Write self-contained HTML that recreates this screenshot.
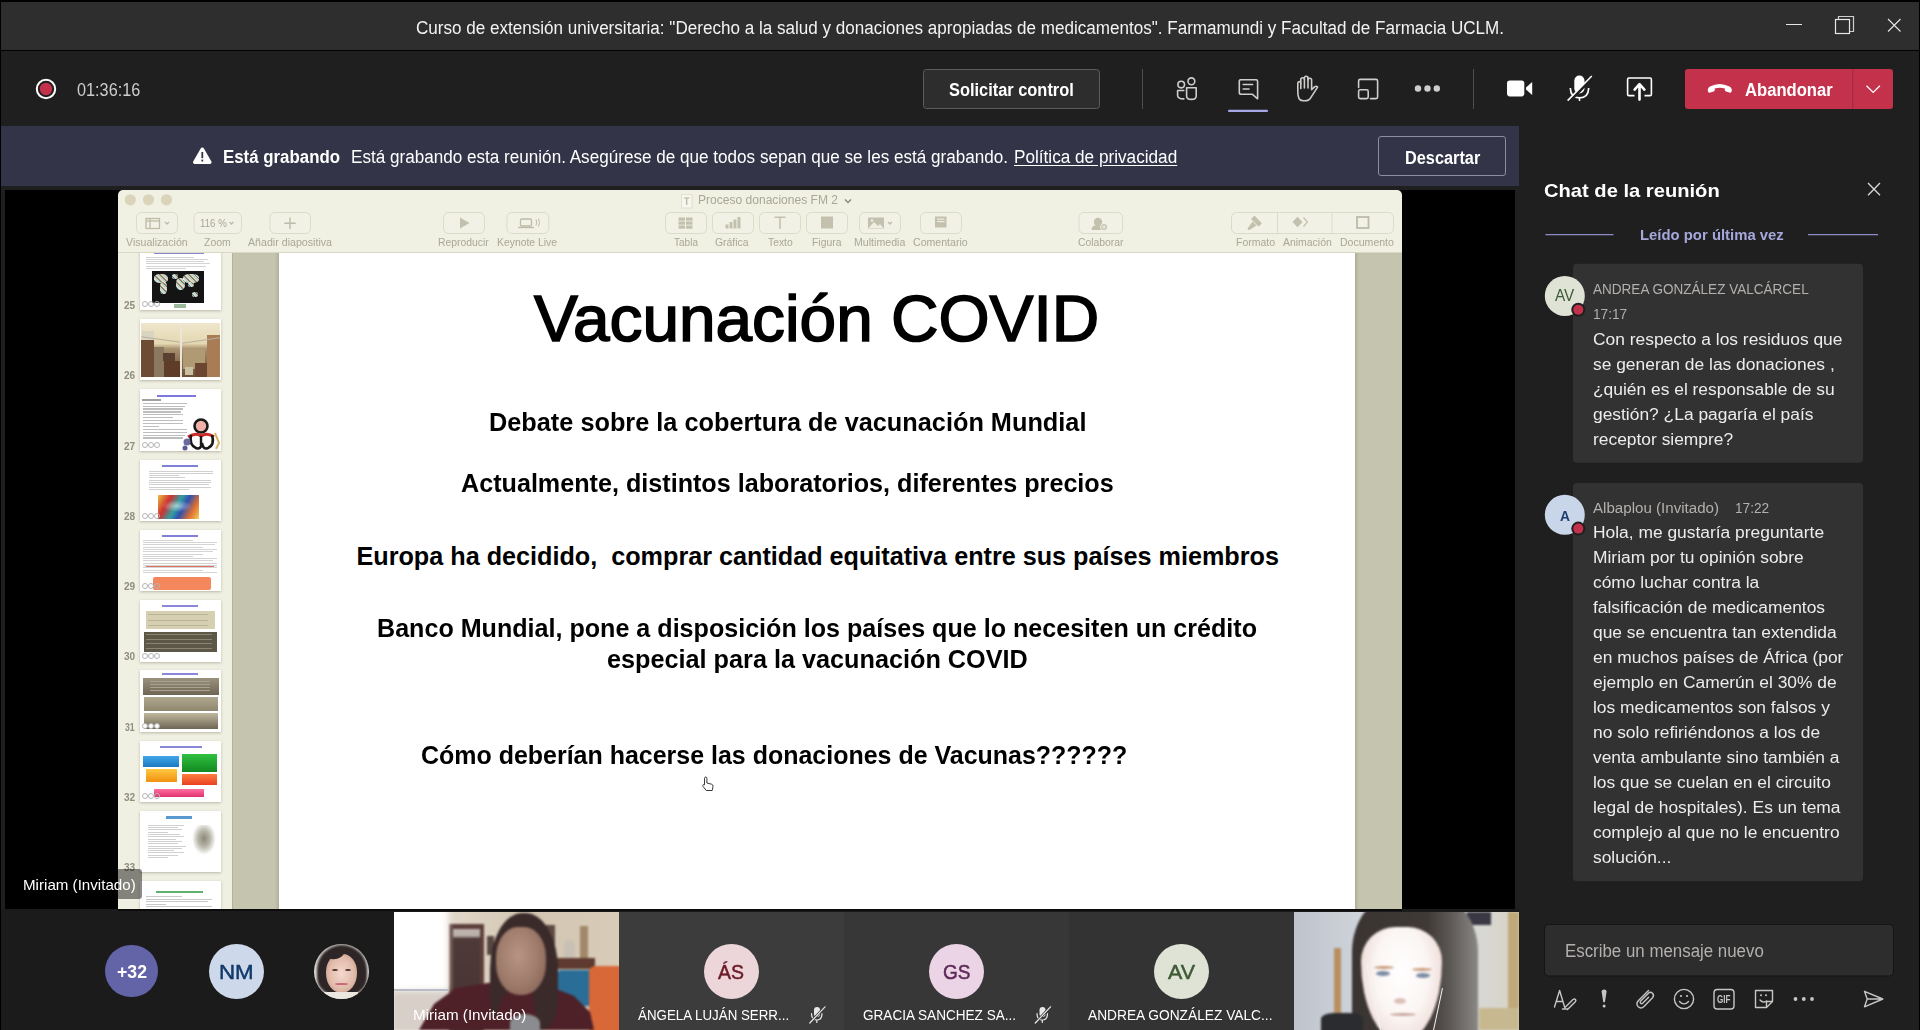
<!DOCTYPE html>
<html><head><meta charset="utf-8">
<style>
*{margin:0;padding:0;box-sizing:border-box}
html,body{width:1920px;height:1030px;overflow:hidden;background:#000;font-family:"Liberation Sans",sans-serif;position:relative}
.a{position:absolute}
.tx{position:absolute;white-space:pre}
svg{position:absolute;overflow:visible}
</style></head><body>

<div class="a" style="left:1px;top:2px;width:1918px;height:48px;background:#2e2e2e"></div>
<div class="a" style="left:1px;top:51px;width:1918px;height:75px;background:#1f1f1f"></div>
<div class="a" style="left:1px;top:126px;width:1518px;height:60px;background:#333448"></div>
<div class="a" style="left:1px;top:186px;width:1518px;height:723px;background:#1f1f1f"></div>
<div class="a" style="left:5px;top:190px;width:1510px;height:719px;background:#000"></div>
<div class="a" style="left:1519px;top:126px;width:400px;height:904px;background:#1f1f1f"></div>
<div class="a" style="left:1px;top:909px;width:1518px;height:121px;background:#1b1b1b"></div>
<div class="a" style="left:118px;top:909px;width:1284px;height:2px;background:#0c0c0c"></div>

<!-- window controls -->
<svg style="left:0;top:0" width="1920" height="50">
 <line x1="1786" y1="24.5" x2="1802" y2="24.5" stroke="#e6e6e6" stroke-width="1"/>
 <path d="M1838.5 19 V16.5 H1853.5 V31.5 H1850" fill="none" stroke="#cfcfcf" stroke-width="1.2"/>
 <rect x="1835.5" y="19.5" width="14" height="14" fill="none" stroke="#e6e6e6" stroke-width="1.2"/>
 <path d="M1888 19 L1900.5 31.5 M1900.5 19 L1888 31.5" stroke="#e6e6e6" stroke-width="1.1"/>
</svg>

<!-- toolbar -->
<svg style="left:0;top:0" width="1920" height="126">
 <circle cx="46" cy="89" r="9.2" fill="none" stroke="#fff" stroke-width="2"/>
 <circle cx="46" cy="89" r="6.2" fill="#c4314b"/>
 <rect x="923.5" y="69.5" width="176" height="39" rx="3" fill="#2d2d2d" stroke="#5c5c5c" stroke-width="1"/>
 <line x1="1142.5" y1="69" x2="1142.5" y2="109" stroke="#4d4d4d" stroke-width="1"/>
 <line x1="1473.5" y1="69" x2="1473.5" y2="109" stroke="#4d4d4d" stroke-width="1"/>
 <g fill="none" stroke="#cfcdcb" stroke-width="1.6" stroke-linecap="round" stroke-linejoin="round">
  <!-- people -->
  <circle cx="1181.2" cy="84.6" r="3.3"/>
  <circle cx="1191.4" cy="81.3" r="3.4"/>
  <path d="M1183.8 90.5 H1177.6 V95.5 Q1177.6 98.8 1183.8 98.9"/>
  <path d="M1186.6 87.8 H1196.2 V96 Q1196.2 99.4 1191.4 99.4 Q1186.6 99.4 1186.6 96 Z"/>
  <!-- chat -->
  <path d="M1240.5 79.8 H1256 Q1257.6 79.8 1257.6 81.4 V98.8 L1252.5 94.3 H1241.2 Q1239.3 94.3 1239.3 92.4 V81 Q1239.3 79.8 1240.5 79.8 Z"/>
  <path d="M1243.2 84.5 H1252.6 M1243.2 89 H1249"/>
  <!-- layout -->
  <path d="M1358.6 87.5 V81 Q1358.6 79.4 1360.2 79.4 H1376 Q1377.6 79.4 1377.6 81 V97 Q1377.6 98.6 1376 98.6 H1370.5"/>
  <rect x="1358.6" y="89.8" width="9.6" height="8.8" rx="1.6"/>
  <!-- hand -->
  <path d="M1299.6 99.4 Q1297.8 97 1297.8 91 V83.3 Q1297.8 81.6 1299.3 81.6 Q1300.8 81.6 1300.8 83.3 V79.5 Q1300.8 77.8 1302.6 77.8 Q1304.4 77.8 1304.4 79.5 V77.9 Q1304.4 76.2 1306.2 76.2 Q1308 76.2 1308 77.9 V80 Q1308 78.3 1309.8 78.3 Q1311.6 78.3 1311.6 80 V89.8 L1314.5 86.9 Q1316.3 85.5 1317.6 87.1 L1310.8 97.6 Q1309.2 100.8 1305 100.8 H1303.4 Q1300.9 100.8 1299.6 99.4 Z"/>
  <path d="M1300.8 83.3 V88.6 M1304.4 79.5 V88 M1308 77.9 V88"/>
 </g>
 <g fill="#cfcdcb"><circle cx="1418" cy="88.5" r="3.2"/><circle cx="1427.5" cy="88.5" r="3.2"/><circle cx="1436.8" cy="88.5" r="3.2"/></g>
 <rect x="1228" y="109.8" width="40" height="2.2" rx="1" fill="#a6a7e6"/>
 <!-- camera -->
 <rect x="1507" y="80.6" width="17.3" height="15.8" rx="2.8" fill="#fff"/>
 <path d="M1526 87.5 L1532.2 82 V95 L1526 89.6 Z" fill="#fff"/>
 <!-- mic off -->
 <rect x="1574.3" y="75.6" width="10.2" height="17.8" rx="5.1" fill="#fff"/>
 <path d="M1570.3 88 Q1570.6 97.8 1579.5 97.8 Q1588.4 97.8 1588.7 88" fill="none" stroke="#fff" stroke-width="1.7"/>
 <line x1="1579.5" y1="97.6" x2="1579.5" y2="101" stroke="#fff" stroke-width="1.5"/>
 <line x1="1569" y1="102" x2="1593" y2="77" stroke="#1f1f1f" stroke-width="3"/>
 <line x1="1567.6" y1="100.6" x2="1591.8" y2="76" stroke="#fff" stroke-width="1.5"/>
 <!-- share -->
 <path d="M1634.5 95.6 H1629 Q1627.6 95.6 1627.6 94.2 V79.4 Q1627.6 78 1629 78 H1650 Q1651.4 78 1651.4 79.4 V94.2 Q1651.4 95.6 1650 95.6 H1644.5" fill="none" stroke="#fff" stroke-width="1.6"/>
 <path d="M1639.5 99.6 V85.5 M1634.6 89.6 L1639.5 84.2 L1644.4 89.6" fill="none" stroke="#fff" stroke-width="2.6" stroke-linecap="round" stroke-linejoin="round"/>
 <!-- abandonar -->
 <rect x="1685" y="69" width="208" height="40" rx="3" fill="#c4314b"/>
 <rect x="1852" y="69" width="1.3" height="40" fill="#a82a42"/>
 <path d="M1708 91.5 Q1707 88.5 1710 86.6 Q1719.5 81.5 1729.5 86.6 Q1732.6 88.5 1731.6 91.5 Q1731 93 1729.3 92.6 L1726 91.6 Q1724.6 91.2 1724.8 89.5 L1724.9 88.6 Q1719.8 86.8 1714.7 88.6 L1714.8 89.5 Q1715 91.2 1713.6 91.6 L1710.3 92.6 Q1708.6 93 1708 91.5 Z" fill="#fff"/>
 <path d="M1866.5 85.8 L1873.2 92.4 L1879.9 85.8" fill="none" stroke="#fff" stroke-width="1.3"/>
</svg>

<!-- banner -->
<svg style="left:0;top:0" width="1520" height="190">
 <path d="M202.3 147.6 Q201.2 147.6 200.4 148.9 L193.2 161.6 Q192.4 163.6 194.3 163.9 H210.3 Q212.2 163.6 211.4 161.6 L204.2 148.9 Q203.4 147.6 202.3 147.6 Z" fill="#fff"/>
 <rect x="201.4" y="152" width="1.8" height="6.2" fill="#333448"/>
 <rect x="201.4" y="159.6" width="1.8" height="1.9" fill="#333448"/>
 <rect x="1378.5" y="136.5" width="127" height="39" rx="2.5" fill="#333448" stroke="#8e8ea0" stroke-width="1"/>
</svg>

<!-- keynote window -->
<div class="a" style="left:118px;top:190px;width:1284px;height:719px;background:#f0f0e3;border-radius:5px 5px 0 0;overflow:hidden">
 <div class="a" style="left:0;top:62px;width:1284px;height:1px;background:#d9d8c6"></div>
 <div class="a" style="left:0;top:63px;width:114px;height:656px;background:#efefe2"></div>
 <div class="a" style="left:114px;top:63px;width:1px;height:656px;background:#b9b095"></div>
 <div class="a" style="left:115px;top:63px;width:1169px;height:656px;background:#c5c4ae"></div>
 <div class="a" style="left:157px;top:63px;width:4px;height:656px;background:linear-gradient(90deg,#c5c4ae,#b0af99)"></div>
 <div class="a" style="left:1237px;top:63px;width:4px;height:656px;background:linear-gradient(90deg,#aeac98,#c5c4ae)"></div>
 <div class="a" style="left:161px;top:63px;width:1076px;height:656px;background:#fff"></div>
</div>
<svg style="left:0;top:0" width="1410" height="260">
 <g fill="#dbd4bb"><circle cx="130.3" cy="199.8" r="5.6"/><circle cx="148.5" cy="199.8" r="5.6"/><circle cx="166.5" cy="199.8" r="5.6"/></g>
 <g fill="#f2f1e6" stroke="#dcdbca" stroke-width="1">
  <rect x="136.5" y="212.5" width="41" height="21" rx="5"/>
  <rect x="194" y="212.5" width="47.5" height="21" rx="5"/>
  <rect x="270" y="212.5" width="40.5" height="21" rx="5"/>
  <rect x="443.5" y="212.5" width="41" height="21" rx="5"/>
  <rect x="507" y="212.5" width="41.8" height="21" rx="5"/>
  <rect x="665.5" y="212.5" width="41" height="21" rx="5"/>
  <rect x="712.5" y="212.5" width="41" height="21" rx="5"/>
  <rect x="759.5" y="212.5" width="41" height="21" rx="5"/>
  <rect x="806.5" y="212.5" width="41" height="21" rx="5"/>
  <rect x="859.5" y="212.5" width="41" height="21" rx="5"/>
  <rect x="920.5" y="212.5" width="41" height="21" rx="5"/>
  <rect x="1079" y="212.5" width="43.6" height="21" rx="5"/>
  <rect x="1231.5" y="212.5" width="162" height="21" rx="5"/>
 </g>
 <g stroke="#dcdbca" stroke-width="1"><line x1="1277.5" y1="213" x2="1277.5" y2="233"/><line x1="1332" y1="213" x2="1332" y2="233"/></g>
 <g fill="none" stroke="#bdbba8" stroke-width="1.3">
  <rect x="146" y="218.5" width="13.5" height="10"/><line x1="150" y1="218.5" x2="150" y2="228.5"/><line x1="146" y1="221" x2="159.5" y2="221"/>
  <path d="M165 222 L167 224 L169 222"/>
  <path d="M229.5 222 L231.5 224 L233.5 222"/>
  <path d="M290 217.5 V229 M284.3 223.2 H295.7" stroke-width="1.4"/>
  <rect x="520.5" y="219" width="11" height="7" rx="1"/><line x1="518" y1="227.5" x2="534" y2="227.5"/>
  <path d="M536 219.5 Q537.5 222.5 536 225.5 M538.5 218.5 Q540.5 222.5 538.5 226.5" stroke-width="1"/>
  <path d="M888 222 L890 224 L892 222"/>
 </g>
 <g fill="#c3c1ad">
  <path d="M460 217.5 L469.5 223 L460 228.5 Z"/>
  <rect x="678.5" y="217.5" width="6.5" height="3.2"/><rect x="686" y="217.5" width="6.5" height="3.2"/>
  <rect x="678.5" y="221.5" width="6.5" height="3.2"/><rect x="686" y="221.5" width="6.5" height="3.2"/>
  <rect x="678.5" y="225.5" width="6.5" height="3.2"/><rect x="686" y="225.5" width="6.5" height="3.2"/>
  <rect x="725.5" y="224.5" width="3" height="4"/><rect x="729.5" y="222" width="3" height="6.5"/><rect x="733.5" y="219.5" width="3" height="9"/><rect x="737.5" y="217" width="3" height="11.5"/>
  <path d="M774.5 216.5 H785.5 V218 H780.8 V229 H779.2 V218 H774.5 Z"/>
  <rect x="821" y="216.5" width="12" height="12"/>
  <rect x="868" y="217.5" width="16" height="11"/>
  <rect x="935" y="216.5" width="11.5" height="11"/>
  <circle cx="1098" cy="222" r="4.2"/><path d="M1091.5 230 Q1091.5 225 1098 225 Q1104.5 225 1104.5 230 Z"/>
  <path d="M1254.5 215.5 L1262 223.5 L1258.5 226.5 L1251 219 Z M1252.5 221.5 L1256.5 225.5 L1249.8 229.8 Q1247.6 230.4 1247.6 228.4 Z"/>
  <path d="M1297.5 216.8 L1302.5 222 L1297.5 227.2 L1292.5 222 Z"/>
 </g>
 <g fill="#efeee1">
  <path d="M868.5 228 L874 222 L878 226 L880 224 L883.5 228 Z" fill="#efeee1"/>
  <circle cx="872" cy="220.5" r="1.3"/>
  <rect x="937" y="218.5" width="7.5" height="1.2"/><rect x="937" y="221" width="7.5" height="1.2"/>
 </g>
 <circle cx="1104" cy="227" r="3.5" fill="#c3c1ad" stroke="#f2f1e6" stroke-width="1"/>
 <path d="M1104 225 V229 M1102 227 H1106" stroke="#f2f1e6" stroke-width="1"/>
 <path d="M1303.5 217.5 L1307.5 222 L1303.5 226.5" fill="none" stroke="#c3c1ad" stroke-width="1.2"/>
 <rect x="1357" y="217" width="11.5" height="11" fill="none" stroke="#bdbba8" stroke-width="1.8"/>
 <path d="M681.5 194.5 H692 V208 H681.5 Z" fill="#f7f6ef" stroke="#dedcc9" stroke-width="0.8"/>
 <path d="M684 198 H689.5 M686.7 198 V205" stroke="#b3b19e" stroke-width="1.2"/>
 <path d="M845 199.5 L848 202.5 L851 199.5" fill="none" stroke="#8d8b7a" stroke-width="1.5"/>
</svg>
<div class="a" style="left:0;top:0;width:1920px;height:909px;overflow:hidden;clip-path:inset(253px 0 0 0)"><div class="a" style="left:140px;top:248.6px;width:81px;height:61.5px;background:#fff;box-shadow:0 1px 2.5px rgba(90,85,60,.35);overflow:hidden"><div class="a" style="left:14px;top:3px;width:50px;height:2px;background:#8a88d0"></div><div class="a" style="left:6px;top:8.0px;width:48px;height:1px;background:#d4d4d4"></div><div class="a" style="left:6px;top:10.3px;width:62px;height:1px;background:#d4d4d4"></div><div class="a" style="left:6px;top:12.6px;width:58px;height:1px;background:#d4d4d4"></div><div class="a" style="left:6px;top:14.9px;width:64px;height:1px;background:#d4d4d4"></div><div class="a" style="left:6px;top:17.2px;width:60px;height:1px;background:#d4d4d4"></div><div class="a" style="left:6px;top:19.5px;width:40px;height:1px;background:#d4d4d4"></div><div class="a" style="left:12px;top:22.5px;width:52px;height:32px;background:#141414"></div><div class="a" style="left:14px;top:25px;width:14px;height:9px;border-radius:40%;background:repeating-linear-gradient(45deg,#f0ece0 0,#f0ece0 1.5px,#4aa898 1.5px,#4aa898 2.2px,#e8a050 2.2px,#e8a050 2.8px,#ffffff 2.8px,#ffffff 4px);opacity:.85;filter:blur(.3px)"></div><div class="a" style="left:20px;top:33px;width:7px;height:12px;border-radius:40%;background:repeating-linear-gradient(45deg,#f0ece0 0,#f0ece0 1.5px,#4aa898 1.5px,#4aa898 2.2px,#e8a050 2.2px,#e8a050 2.8px,#ffffff 2.8px,#ffffff 4px);opacity:.85;filter:blur(.3px)"></div><div class="a" style="left:32px;top:25px;width:6px;height:5px;border-radius:40%;background:repeating-linear-gradient(45deg,#f0ece0 0,#f0ece0 1.5px,#4aa898 1.5px,#4aa898 2.2px,#e8a050 2.2px,#e8a050 2.8px,#ffffff 2.8px,#ffffff 4px);opacity:.85;filter:blur(.3px)"></div><div class="a" style="left:36px;top:29px;width:9px;height:12px;border-radius:40%;background:repeating-linear-gradient(45deg,#f0ece0 0,#f0ece0 1.5px,#4aa898 1.5px,#4aa898 2.2px,#e8a050 2.2px,#e8a050 2.8px,#ffffff 2.8px,#ffffff 4px);opacity:.85;filter:blur(.3px)"></div><div class="a" style="left:43px;top:25px;width:16px;height:9px;border-radius:40%;background:repeating-linear-gradient(45deg,#f0ece0 0,#f0ece0 1.5px,#4aa898 1.5px,#4aa898 2.2px,#e8a050 2.2px,#e8a050 2.8px,#ffffff 2.8px,#ffffff 4px);opacity:.85;filter:blur(.3px)"></div><div class="a" style="left:48px;top:33px;width:6px;height:5px;border-radius:40%;background:repeating-linear-gradient(45deg,#f0ece0 0,#f0ece0 1.5px,#4aa898 1.5px,#4aa898 2.2px,#e8a050 2.2px,#e8a050 2.8px,#ffffff 2.8px,#ffffff 4px);opacity:.85;filter:blur(.3px)"></div><div class="a" style="left:52px;top:43px;width:6px;height:5px;border-radius:40%;background:repeating-linear-gradient(45deg,#f0ece0 0,#f0ece0 1.5px,#4aa898 1.5px,#4aa898 2.2px,#e8a050 2.2px,#e8a050 2.8px,#ffffff 2.8px,#ffffff 4px);opacity:.85;filter:blur(.3px)"></div><div class="a" style="left:34px;top:55px;width:12px;height:4px;background:#9cb89a"></div><div class="a" style="left:2.0px;top:52.2px;width:6px;height:6px;border-radius:50%;border:1px solid #b4b4b4;background:transparent"></div><div class="a" style="left:8.2px;top:52.2px;width:6px;height:6px;border-radius:50%;border:1px solid #b4b4b4;background:transparent"></div><div class="a" style="left:14.4px;top:52.2px;width:6px;height:6px;border-radius:50%;border:1px solid #b4b4b4;background:transparent"></div></div><div class="a" style="left:140px;top:318.9px;width:81px;height:61.5px;background:#fff;box-shadow:0 1px 2.5px rgba(90,85,60,.35);overflow:hidden"><div class="a" style="left:1px;top:3.7px;width:79px;height:54px;overflow:hidden;background:linear-gradient(180deg,#eee6cc 0,#e4d8b0 38%,#a89070 48%,#8a7050 70%,#6a5038 100%)"><div class="a" style="left:0;top:0;width:79px;height:54px;filter:blur(.6px)"><div class="a" style="left:0;top:17px;width:13px;height:37px;background:#6e4c34"></div><div class="a" style="left:1px;top:8px;width:12px;height:9px;background:#d8d4c0"></div><div class="a" style="left:13px;top:24px;width:10px;height:30px;background:#8a7860"></div><div class="a" style="left:22px;top:30px;width:12px;height:8px;background:#5a4030"></div><div class="a" style="left:23px;top:38px;width:17px;height:16px;background:#5e3c28"></div><div class="a" style="left:42px;top:26px;width:22px;height:20px;background:#b09a74"></div><div class="a" style="left:44px;top:44px;width:8px;height:8px;background:#c8c0a0"></div><div class="a" style="left:54px;top:40px;width:12px;height:14px;background:#6a4630"></div><div class="a" style="left:66px;top:12px;width:13px;height:42px;background:#a87c54"></div><div class="a" style="left:0;top:16px;width:40px;height:1px;background:#b8b0a0;transform:rotate(8deg)"></div><div class="a" style="left:41px;top:17px;width:38px;height:1px;background:#b8b0a0;transform:rotate(-8deg)"></div></div></div><div class="a" style="left:40.3px;top:3.7px;width:1.3px;height:54px;background:#ece6d8"></div></div><div class="a" style="left:140px;top:389.2px;width:81px;height:61.5px;background:#fff;box-shadow:0 1px 2.5px rgba(90,85,60,.35);overflow:hidden"><div class="a" style="left:17px;top:6px;width:39px;height:2px;background:#7c78e0"></div><div class="a" style="left:2px;top:10px;width:19px;height:1.5px;background:#a0a0a0"></div><div class="a" style="left:3px;top:13.5px;width:44px;height:1.2px;background:#bdbdbd"></div><div class="a" style="left:3px;top:16.4px;width:42px;height:1.2px;background:#bdbdbd"></div><div class="a" style="left:3px;top:19.3px;width:40px;height:1.2px;background:#bdbdbd"></div><div class="a" style="left:3px;top:22.2px;width:38px;height:1.2px;background:#bdbdbd"></div><div class="a" style="left:3px;top:25.1px;width:40px;height:1.2px;background:#bdbdbd"></div><div class="a" style="left:3px;top:28.0px;width:30px;height:1.2px;background:#bdbdbd"></div><div class="a" style="left:3px;top:30.9px;width:40px;height:1.2px;background:#bdbdbd"></div><div class="a" style="left:3px;top:33.8px;width:40px;height:1.2px;background:#bdbdbd"></div><div class="a" style="left:3px;top:36.7px;width:16px;height:1.2px;background:#bdbdbd"></div><div class="a" style="left:3px;top:39.6px;width:44px;height:1.2px;background:#bdbdbd"></div><div class="a" style="left:3px;top:42.5px;width:44px;height:1.2px;background:#bdbdbd"></div><div class="a" style="left:3px;top:45.4px;width:42px;height:1.2px;background:#bdbdbd"></div><div class="a" style="left:3px;top:48.3px;width:40px;height:1.2px;background:#bdbdbd"></div><svg style="left:42px;top:26px" width="40" height="36" viewBox="0 0 40 36"><g filter="blur(.3px)"><circle cx="19" cy="11" r="6.5" fill="#f0b0a8" stroke="#181818" stroke-width="2.6"/><path d="M6 22 Q14 17 19 21 Q25 17 32 22" fill="none" stroke="#d02828" stroke-width="3"/><path d="M9 20 Q7 30 14 33 Q19 35 20 28 Q21 35 26 33 Q33 30 30 20" fill="none" stroke="#181818" stroke-width="2.6"/><path d="M19 21 V30" stroke="#181818" stroke-width="2.4"/><circle cx="5" cy="27" r="3.5" fill="#6a6aa0"/><circle cx="3" cy="33" r="2.5" fill="#5a5a90"/><path d="M33 18 L37 28 L34 34" fill="none" stroke="#d8b060" stroke-width="2"/></g></svg><div class="a" style="left:2.0px;top:53.2px;width:6px;height:6px;border-radius:50%;border:1px solid #b4b4b4;background:transparent"></div><div class="a" style="left:8.2px;top:53.2px;width:6px;height:6px;border-radius:50%;border:1px solid #b4b4b4;background:transparent"></div><div class="a" style="left:14.4px;top:53.2px;width:6px;height:6px;border-radius:50%;border:1px solid #b4b4b4;background:transparent"></div></div><div class="a" style="left:140px;top:459.5px;width:81px;height:61.5px;background:#fff;box-shadow:0 1px 2.5px rgba(90,85,60,.35);overflow:hidden"><div class="a" style="left:22px;top:5px;width:36px;height:2px;background:#8080d8"></div><div class="a" style="left:9px;top:11.0px;width:64px;height:1px;background:#d0d0d0"></div><div class="a" style="left:9px;top:13.3px;width:64px;height:1px;background:#d0d0d0"></div><div class="a" style="left:9px;top:15.6px;width:30px;height:1px;background:#d0d0d0"></div><div class="a" style="left:9px;top:17.9px;width:36px;height:1px;background:#d0d0d0"></div><div class="a" style="left:9px;top:20.2px;width:62px;height:1px;background:#d0d0d0"></div><div class="a" style="left:9px;top:22.5px;width:62px;height:1px;background:#d0d0d0"></div><div class="a" style="left:9px;top:24.8px;width:60px;height:1px;background:#d0d0d0"></div><div class="a" style="left:9px;top:27.1px;width:62px;height:1px;background:#d0d0d0"></div><div class="a" style="left:9px;top:29.4px;width:40px;height:1px;background:#d0d0d0"></div><div class="a" style="left:17.5px;top:35.5px;width:41px;height:23.5px;background:linear-gradient(120deg,#e8c040 0,#d03030 25%,#30a0a0 45%,#3050b0 60%,#e07030 80%,#f0d060 100%)"></div><div class="a" style="left:22px;top:40px;width:30px;height:12px;background:radial-gradient(ellipse,#ffffff88,transparent 70%)"></div><div class="a" style="left:2.0px;top:53.2px;width:6px;height:6px;border-radius:50%;border:1px solid #b4b4b4;background:transparent"></div><div class="a" style="left:8.2px;top:53.2px;width:6px;height:6px;border-radius:50%;border:1px solid #b4b4b4;background:transparent"></div><div class="a" style="left:14.4px;top:53.2px;width:6px;height:6px;border-radius:50%;border:1px solid #b4b4b4;background:transparent"></div></div><div class="a" style="left:140px;top:529.8px;width:81px;height:61.5px;background:#fff;box-shadow:0 1px 2.5px rgba(90,85,60,.35);overflow:hidden"><div class="a" style="left:22px;top:5px;width:36px;height:2px;background:#8080d8"></div><div class="a" style="left:3px;top:10.0px;width:50px;height:1px;background:#d4d4d4"></div><div class="a" style="left:3px;top:12.3px;width:74px;height:1px;background:#d4d4d4"></div><div class="a" style="left:3px;top:14.6px;width:72px;height:1px;background:#d4d4d4"></div><div class="a" style="left:3px;top:16.9px;width:60px;height:1px;background:#d4d4d4"></div><div class="a" style="left:3px;top:19.2px;width:74px;height:1px;background:#d4d4d4"></div><div class="a" style="left:3px;top:21.5px;width:70px;height:1px;background:#d4d4d4"></div><div class="a" style="left:3px;top:23.8px;width:60px;height:1px;background:#d4d4d4"></div><div class="a" style="left:3px;top:26.1px;width:50px;height:1px;background:#d4d4d4"></div><div class="a" style="left:3px;top:28.4px;width:74px;height:1px;background:#d4d4d4"></div><div class="a" style="left:3px;top:30.7px;width:70px;height:1px;background:#d4d4d4"></div><div class="a" style="left:3px;top:33.0px;width:74px;height:1px;background:#d4d4d4"></div><div class="a" style="left:3px;top:35.3px;width:74px;height:1px;background:#d4d4d4"></div><div class="a" style="left:3px;top:37.6px;width:74px;height:1px;background:#d4d4d4"></div><div class="a" style="left:3px;top:39.9px;width:60px;height:1px;background:#d4d4d4"></div><div class="a" style="left:3px;top:42.2px;width:74px;height:1px;background:#d4d4d4"></div><div class="a" style="left:6px;top:36px;width:68px;height:1px;background:#e07060"></div><div class="a" style="left:12.5px;top:47px;width:58.5px;height:13px;border-radius:2px;background:#f4875c"></div><div class="a" style="left:2.0px;top:53.2px;width:6px;height:6px;border-radius:50%;border:1px solid #b4b4b4;background:transparent"></div><div class="a" style="left:8.2px;top:53.2px;width:6px;height:6px;border-radius:50%;border:1px solid #b4b4b4;background:transparent"></div><div class="a" style="left:14.4px;top:53.2px;width:6px;height:6px;border-radius:50%;border:1px solid #b4b4b4;background:transparent"></div></div><div class="a" style="left:140px;top:600.0px;width:81px;height:61.5px;background:#fff;box-shadow:0 1px 2.5px rgba(90,85,60,.35);overflow:hidden"><div class="a" style="left:22px;top:5px;width:36px;height:2px;background:#8a86d8"></div><div class="a" style="left:6px;top:10.5px;width:69px;height:18px;background:#d6cfb2"></div><div class="a" style="left:4px;top:31.5px;width:72.5px;height:20px;background:#5d5747"></div><div class="a" style="left:8px;top:14.0px;width:60px;height:1px;background:#bab498"></div><div class="a" style="left:8px;top:19.5px;width:60px;height:1px;background:#bab498"></div><div class="a" style="left:8px;top:25.0px;width:60px;height:1px;background:#bab498"></div><div class="a" style="left:6px;top:34.0px;width:66px;height:1px;background:#8a8472"></div><div class="a" style="left:6px;top:38.5px;width:66px;height:1px;background:#8a8472"></div><div class="a" style="left:6px;top:43.0px;width:66px;height:1px;background:#8a8472"></div><div class="a" style="left:6px;top:47.5px;width:66px;height:1px;background:#8a8472"></div><div class="a" style="left:2.0px;top:53.2px;width:6px;height:6px;border-radius:50%;border:1px solid #b4b4b4;background:transparent"></div><div class="a" style="left:8.2px;top:53.2px;width:6px;height:6px;border-radius:50%;border:1px solid #b4b4b4;background:transparent"></div><div class="a" style="left:14.4px;top:53.2px;width:6px;height:6px;border-radius:50%;border:1px solid #b4b4b4;background:transparent"></div></div><div class="a" style="left:140px;top:670.3px;width:81px;height:61.5px;background:#fff;box-shadow:0 1px 2.5px rgba(90,85,60,.35);overflow:hidden"><div class="a" style="left:22px;top:3px;width:36px;height:2px;background:#8a86d8"></div><div class="a" style="left:3px;top:8px;width:76px;height:17px;background:linear-gradient(180deg,#9a927c,#6e6654)"></div><div class="a" style="left:4px;top:26.5px;width:74px;height:14px;background:linear-gradient(180deg,#b0a88e,#8e866e)"></div><div class="a" style="left:4px;top:43px;width:74px;height:15.5px;background:linear-gradient(180deg,#c0b89c,#6e6654)"></div><div class="a" style="left:10px;top:11.0px;width:60px;height:1px;background:#aaa290"></div><div class="a" style="left:10px;top:14.0px;width:60px;height:1px;background:#aaa290"></div><div class="a" style="left:10px;top:17.0px;width:60px;height:1px;background:#aaa290"></div><div class="a" style="left:10px;top:20.0px;width:60px;height:1px;background:#aaa290"></div><div class="a" style="left:2.0px;top:52.7px;width:6px;height:6px;border-radius:50%;border:1px solid #b4b4b4;background:#fff"></div><div class="a" style="left:8.2px;top:52.7px;width:6px;height:6px;border-radius:50%;border:1px solid #b4b4b4;background:#fff"></div><div class="a" style="left:14.4px;top:52.7px;width:6px;height:6px;border-radius:50%;border:1px solid #b4b4b4;background:#fff"></div></div><div class="a" style="left:140px;top:740.6px;width:81px;height:61.5px;background:#fff;box-shadow:0 1px 2.5px rgba(90,85,60,.35);overflow:hidden"><div class="a" style="left:20px;top:5px;width:42px;height:2px;background:#8a86d8"></div><div class="a" style="left:2.5px;top:15.5px;width:36.5px;height:10.5px;background:linear-gradient(180deg,#40a8e8,#1e78c0)"></div><div class="a" style="left:42px;top:13px;width:34.5px;height:18px;background:linear-gradient(180deg,#30c040,#138a22)"></div><div class="a" style="left:6px;top:28.5px;width:30.5px;height:13px;background:linear-gradient(180deg,#ffc840,#f09010)"></div><div class="a" style="left:42px;top:33px;width:34.5px;height:11px;background:linear-gradient(180deg,#ff8040,#e84020)"></div><div class="a" style="left:13.5px;top:48px;width:50px;height:8px;background:linear-gradient(180deg,#ff70a0,#e03070)"></div><div class="a" style="left:2.0px;top:52.2px;width:6px;height:6px;border-radius:50%;border:1px solid #b4b4b4;background:transparent"></div><div class="a" style="left:8.2px;top:52.2px;width:6px;height:6px;border-radius:50%;border:1px solid #b4b4b4;background:transparent"></div><div class="a" style="left:14.4px;top:52.2px;width:6px;height:6px;border-radius:50%;border:1px solid #b4b4b4;background:transparent"></div></div><div class="a" style="left:140px;top:810.9px;width:81px;height:61.5px;background:#fff;box-shadow:0 1px 2.5px rgba(90,85,60,.35);overflow:hidden"><div class="a" style="left:26px;top:5px;width:26px;height:3px;background:#5a98d0"></div><div class="a" style="left:8px;top:14.0px;width:36px;height:1px;background:#d0d0d0"></div><div class="a" style="left:8px;top:16.3px;width:30px;height:1px;background:#d0d0d0"></div><div class="a" style="left:8px;top:18.6px;width:34px;height:1px;background:#d0d0d0"></div><div class="a" style="left:8px;top:20.9px;width:20px;height:1px;background:#d0d0d0"></div><div class="a" style="left:8px;top:23.2px;width:32px;height:1px;background:#d0d0d0"></div><div class="a" style="left:8px;top:25.5px;width:36px;height:1px;background:#d0d0d0"></div><div class="a" style="left:8px;top:27.8px;width:28px;height:1px;background:#d0d0d0"></div><div class="a" style="left:8px;top:30.1px;width:34px;height:1px;background:#d0d0d0"></div><div class="a" style="left:8px;top:32.4px;width:30px;height:1px;background:#d0d0d0"></div><div class="a" style="left:8px;top:34.7px;width:38px;height:1px;background:#d0d0d0"></div><div class="a" style="left:8px;top:37.0px;width:34px;height:1px;background:#d0d0d0"></div><div class="a" style="left:8px;top:39.3px;width:26px;height:1px;background:#d0d0d0"></div><div class="a" style="left:8px;top:41.6px;width:36px;height:1px;background:#d0d0d0"></div><div class="a" style="left:8px;top:43.9px;width:30px;height:1px;background:#d0d0d0"></div><div class="a" style="left:8px;top:46.2px;width:20px;height:1px;background:#d0d0d0"></div><div class="a" style="left:52px;top:14px;width:24px;height:30px;background:radial-gradient(ellipse at 50% 45%,#8a8878 0,#b8b6a8 35%,#fff 70%)"></div></div><div class="a" style="left:140px;top:881.2px;width:81px;height:61.5px;background:#fff;box-shadow:0 1px 2.5px rgba(90,85,60,.35);overflow:hidden"><div class="a" style="left:16px;top:9.5px;width:47px;height:2.5px;background:#60b070"></div><div class="a" style="left:6px;top:15.0px;width:36px;height:1px;background:#c8c8c8"></div><div class="a" style="left:6px;top:17.5px;width:66px;height:1px;background:#c8c8c8"></div><div class="a" style="left:6px;top:20.0px;width:62px;height:1px;background:#c8c8c8"></div><div class="a" style="left:6px;top:22.5px;width:20px;height:1px;background:#c8c8c8"></div><div class="a" style="left:6px;top:25.0px;width:66px;height:1px;background:#c8c8c8"></div><div class="a" style="left:6px;top:27.5px;width:60px;height:1px;background:#c8c8c8"></div></div></div>
<!-- name label on stage -->
<div class="a" style="left:14px;top:869px;width:128px;height:29.5px;background:rgba(0,0,0,.45);border-radius:3px;z-index:2"></div>
<!-- cursor -->
<svg style="left:0;top:0" width="1520" height="909">
 <path d="M704.5 778.5 Q704.5 777 705.7 777 Q706.9 777 706.9 778.5 V783 L711.5 784.2 Q713.3 784.7 713 786.5 L712.2 790.5 H706.3 L703 786.4 Q702.3 785.2 703.3 784.6 Q704 784.2 704.5 784.8 Z" fill="#fff" stroke="#222" stroke-width="0.9"/>
</svg>

<!-- chat panel -->
<svg style="left:0;top:0" width="1920" height="1030">
 <path d="M1868 183 L1880 195.3 M1880 183 L1868 195.3" stroke="#d8d8d8" stroke-width="1.3"/>
 <line x1="1545.5" y1="234.7" x2="1613.5" y2="234.7" stroke="#8b8cc7" stroke-width="1.3"/>
 <line x1="1808" y1="234.7" x2="1878" y2="234.7" stroke="#8b8cc7" stroke-width="1.3"/>
 <rect x="1573" y="263.8" width="290" height="199" rx="4" fill="#323232"/>
 <rect x="1573" y="483" width="290" height="398.3" rx="4" fill="#323232"/>
 <circle cx="1564.8" cy="295.9" r="20" fill="#dfe3d6"/>
 <circle cx="1564.8" cy="514.8" r="20" fill="#c9d5e8"/>
 <circle cx="1578.3" cy="309.8" r="7" fill="#1f1f1f"/><circle cx="1578.3" cy="309.8" r="5" fill="#c4314b"/>
 <circle cx="1578.3" cy="528.6" r="7" fill="#1f1f1f"/><circle cx="1578.3" cy="528.6" r="5" fill="#c4314b"/>
 <rect x="1544.5" y="924.5" width="349" height="51.5" rx="4" fill="#2d2d2d" stroke="#141414" stroke-width="1"/>
 <g fill="none" stroke="#c8c6c4" stroke-width="1.4" stroke-linecap="round" stroke-linejoin="round">
  <path d="M1554.5 1007 L1559.6 990.5 L1564.6 1007 M1556.3 1001.5 H1563"/>
  <path d="M1562.5 1009 H1568 M1565 1007.5 L1573 999.5 Q1574.5 998.4 1575.5 999.5 Q1576.4 1000.6 1575.3 1001.7 L1567.5 1009.5"/>
  <path d="M1648.5 990.5 L1638.3 1000.7 Q1635.5 1004 1638.3 1006.7 Q1641 1009.3 1644 1006.4 L1652.5 997.8 Q1654.6 995.4 1652.5 993.3 Q1650.4 991.3 1648.2 993.5 L1640.5 1001.3 Q1639.7 1002.5 1640.6 1003.3 Q1641.5 1004.2 1642.6 1003.2 L1648.6 997.2"/>
  <circle cx="1684" cy="999" r="9.6"/>
  <path d="M1679.5 1001.5 Q1684 1006.3 1688.5 1001.5"/>
  <rect x="1714" y="989.5" width="20" height="19.5" rx="3.2"/>
  <path d="M1755.5 990.5 H1772.5 V1001.5 L1766.5 1007.5 H1755.5 Z M1766.5 1007.5 V1001.5 H1772.5"/>
  <path d="M1760 1000 Q1763 1003.5 1766.5 1001"/>
  <path d="M1864.5 991.3 L1882.8 999 L1864.5 1006.8 L1867.2 999 Z M1867.2 999 H1882.8"/>
 </g>
 <g fill="#c8c6c4">
  <path d="M1601.6 991.4 Q1601.6 989.6 1604.1 989.6 Q1606.6 989.6 1606.6 991.4 L1604.9 1002.2 H1603.3 Z"/>
  <circle cx="1604.1" cy="1006" r="1.5"/>
  <circle cx="1681" cy="996" r="1.1"/><circle cx="1687" cy="996" r="1.1"/>
  <circle cx="1761" cy="995.3" r="1"/><circle cx="1766" cy="995.3" r="1"/>
  <circle cx="1795.5" cy="999" r="1.9"/><circle cx="1803.8" cy="999" r="1.9"/><circle cx="1812" cy="999" r="1.9"/>
 </g>
</svg>

<!-- bottom strip -->
<div class="a" style="left:1px;top:911px;width:1518px;height:1px;background:#1b1b1b"></div>
<div class="a" style="left:105px;top:944.8px;width:52.7px;height:52.7px;border-radius:50%;background:#6264a7"></div>
<div class="a" style="left:209px;top:943.9px;width:55.2px;height:55.2px;border-radius:50%;background:#cdd9ea"></div>
<div class="a" style="left:314px;top:943.9px;width:55.2px;height:55.2px;border-radius:50%;overflow:hidden;background:linear-gradient(180deg,#c8c4c0,#f4f0ec)">
 <div class="a" style="left:3px;top:1px;width:50px;height:50px;border-radius:50% 50% 35% 35%;background:#2e2626;filter:blur(.8px)"></div>
 <div class="a" style="left:12px;top:10px;width:31px;height:39px;border-radius:46% 46% 50% 50%;background:radial-gradient(ellipse at 50% 50%,#f4d8cc 0,#e2bcac 55%,#b88c7c 100%);filter:blur(.5px)"></div>
 <div class="a" style="left:14px;top:6px;width:16px;height:9px;border-radius:50%;background:#2e2626;transform:rotate(-15deg)"></div>
 <div class="a" style="left:18px;top:25px;width:6px;height:2px;background:#4a3430;border-radius:50%"></div>
 <div class="a" style="left:31px;top:25px;width:6px;height:2px;background:#4a3430;border-radius:50%"></div>
 <div class="a" style="left:21px;top:39px;width:13px;height:2.5px;background:#c86878;border-radius:50%"></div>
 <div class="a" style="left:10px;top:48px;width:34px;height:10px;background:#ece6e0;filter:blur(.6px)"></div>
</div>
<div class="a" style="left:619px;top:912px;width:225px;height:118px;background:#3c3c3c"></div>
<div class="a" style="left:844px;top:912px;width:225px;height:118px;background:#373737"></div>
<div class="a" style="left:1069px;top:912px;width:225px;height:118px;background:#333333"></div>
<div class="a" style="left:704px;top:943.9px;width:55.2px;height:55.2px;border-radius:50%;background:#ecd6da"></div>
<div class="a" style="left:928.5px;top:943.9px;width:55.2px;height:55.2px;border-radius:50%;background:#ead4e6"></div>
<div class="a" style="left:1153.7px;top:943.9px;width:55.2px;height:55.2px;border-radius:50%;background:#dfe3d6"></div>

<!-- video 1 -->
<div class="a" style="left:394px;top:912px;width:225px;height:118px;overflow:hidden;background:linear-gradient(90deg,#ece8e2 0,#ddd2c2 35%,#d2c6b2 60%,#d8ccb8 100%)">
 <div class="a" style="left:0;top:0;width:225px;height:118px;filter:blur(1.3px)">
  <div class="a" style="left:0;top:78px;width:56px;height:40px;background:#d8d0c8"></div>
  <div class="a" style="left:55px;top:12px;width:35px;height:108px;background:#5c3e3a"></div>
  <div class="a" style="left:59px;top:17px;width:27px;height:103px;background:linear-gradient(180deg,#c0b8b0 0,#b8b0a8 7%,#4e3a38 9%,#463432 100%)"></div>
  <div class="a" style="left:93px;top:24px;width:7px;height:19px;background:#5a4640"></div>
  <div class="a" style="left:146px;top:13px;width:15px;height:35px;background:#5e4a44"></div>
  <div class="a" style="left:161px;top:46px;width:40px;height:11px;background:#5e3a30"></div>
  <div class="a" style="left:170px;top:28px;width:11px;height:18px;background:#c8c0b4;border-radius:40% 40% 10% 10%"></div>
  <div class="a" style="left:186px;top:14px;width:8px;height:32px;background:#a08868"></div>
  <div class="a" style="left:164px;top:58px;width:36px;height:36px;background:#2a6e98;border-radius:3px"></div>
  <div class="a" style="left:195px;top:54px;width:32px;height:66px;background:#d86838;border-radius:6px 0 0 0"></div>
  <div class="a" style="left:0;top:0;width:225px;height:118px;background:#4e2028;clip-path:polygon(25px 118px,40px 92px,62px 76px,100px 70px,150px 72px,180px 84px,196px 100px,200px 118px)"></div>
  <div class="a" style="left:96px;top:1px;width:68px;height:117px;border-radius:48% 48% 25% 30%;background:#3a2a2a;clip-path:polygon(0 0,100% 0,100% 100%,70% 100%,60% 60%,20% 70%,0 100%)"></div>
  <div class="a" style="left:102px;top:15px;width:50px;height:68px;border-radius:44% 44% 46% 46%;background:radial-gradient(ellipse at 45% 42%,#b89484 0,#a07c6c 50%,#7e5a4e 100%)"></div>
  <div class="a" style="left:116px;top:102px;width:30px;height:18px;background:#8a8c90;border-radius:50% 50% 0 0"></div>
 </div>
 <div class="a" style="left:-10px;top:-10px;width:64px;height:88px;background:#fff;filter:blur(3px)"></div>
 <div class="a" style="left:-4px;top:77px;width:58px;height:2px;background:#b8bcc8;filter:blur(.6px)"></div>
</div>
<!-- video 2 -->
<div class="a" style="left:1294px;top:912px;width:225px;height:118px;overflow:hidden;background:linear-gradient(90deg,#bfc3cc 0,#cfd3da 30%,#d6d8dc 75%,#d8d4c4 100%)">
 <div class="a" style="left:0;top:0;width:225px;height:118px;filter:blur(1px)">
  <div class="a" style="left:40px;top:36px;width:7px;height:80px;background:#b89060"></div>
  <div class="a" style="left:214px;top:0;width:11px;height:118px;background:#c0a878"></div>
  <div class="a" style="left:173px;top:0;width:24px;height:13px;background:#3a3844"></div>
  <div class="a" style="left:185px;top:96px;width:40px;height:22px;background:#c8b890"></div>
  <div class="a" style="left:58px;top:-20px;width:126px;height:150px;border-radius:40% 40% 8% 8%;background:linear-gradient(90deg,#3a3432 0,#403a36 60%,#5c5856 78%,#8a8884 100%)"></div>
  <div class="a" style="left:67px;top:15px;width:81px;height:115px;border-radius:42% 42% 50% 50% / 30% 30% 70% 70%;background:radial-gradient(ellipse at 50% 40%,#ffffff 0,#fbf6f4 45%,#eedcd8 75%,#c8aca4 100%)"></div>
  <div class="a" style="left:80px;top:54px;width:20px;height:3px;background:#c89878;border-radius:50%"></div>
  <div class="a" style="left:118px;top:56px;width:20px;height:3px;background:#c89878;border-radius:50%"></div>
  <div class="a" style="left:82px;top:59px;width:14px;height:5px;border-radius:50%;background:#7c8ca4"></div>
  <div class="a" style="left:122px;top:61px;width:14px;height:5px;border-radius:50%;background:#7c8ca4"></div>
  <div class="a" style="left:100px;top:86px;width:12px;height:6px;border-radius:50%;background:#dcc0b8"></div>
  <div class="a" style="left:96px;top:101px;width:26px;height:3px;border-radius:50%;background:#c8a49c"></div>
  <div class="a" style="left:27px;top:101px;width:42px;height:20px;background:#2a2c30;border-radius:30% 30% 0 0"></div>
 </div>
 <div class="a" style="left:72px;top:52px;width:1.3px;height:70px;background:#f4f4f4;transform:rotate(-12deg);transform-origin:0 0"></div>
 <div class="a" style="left:148px;top:76px;width:1.3px;height:44px;background:#f4f4f4;transform:rotate(12deg);transform-origin:0 0"></div>
</div>
<svg style="left:0;top:0" width="1520" height="1030">
 <g fill="none" stroke="#e8e8e8" stroke-width="1.2" stroke-linecap="round">
  <g id="mo">
   <rect x="814" y="1007" width="6" height="10" rx="3" fill="#e8e8e8" stroke="none"/>
   <path d="M811.5 1013.5 Q811.5 1020 816.8 1020 Q822 1020 822 1013.5 M816.8 1020 V1022.5"/>
   <line x1="809.2" y1="1023.6" x2="825.6" y2="1006.2" stroke="#3c3c3c" stroke-width="2.6"/><line x1="809.8" y1="1023" x2="825" y2="1006.8"/>
  </g>
  <use href="#mo" x="225.5"/>
 </g>
</svg>
<div class="tx" id="t_title" style="left:415.60px;top:18.76px;font-size:18px;line-height:18px;font-weight:400;color:#f3f3f3;transform:scaleX(0.9483);transform-origin:0 0;">Curso de extensión universitaria: "Derecho a la salud y donaciones apropiadas de medicamentos". Farmamundi y Facultad de Farmacia UCLM.</div>
<div class="tx" id="t_timer" style="left:76.80px;top:80.76px;font-size:18px;line-height:18px;font-weight:400;color:#cfcdcb;transform:scaleX(0.9033);transform-origin:0 0;">01:36:16</div>
<div class="tx" id="t_solic" style="left:949.30px;top:80.76px;font-size:18px;line-height:18px;font-weight:700;color:#ffffff;transform:scaleX(0.9107);transform-origin:0 0;">Solicitar control</div>
<div class="tx" id="t_aband" style="left:1744.70px;top:80.76px;font-size:18px;line-height:18px;font-weight:700;color:#ffffff;transform:scaleX(0.9230);transform-origin:0 0;">Abandonar</div>
<div class="tx" id="t_grab" style="left:223.10px;top:148.36px;font-size:18px;line-height:18px;font-weight:700;color:#ffffff;transform:scaleX(0.9358);transform-origin:0 0;">Está grabando</div>
<div class="tx" id="t_grab2" style="left:350.60px;top:148.36px;font-size:18px;line-height:18px;font-weight:400;color:#ffffff;transform:scaleX(0.9502);transform-origin:0 0;">Está grabando esta reunión. Asegúrese de que todos sepan que se les está grabando.</div>
<div class="tx" id="t_link" style="left:1013.80px;top:148.36px;font-size:18px;line-height:18px;font-weight:400;color:#ffffff;transform:scaleX(0.9538);transform-origin:0 0;text-decoration:underline;text-underline-offset:2px">Política de privacidad</div>
<div class="tx" id="t_desc" style="left:1404.60px;top:148.56px;font-size:18px;line-height:18px;font-weight:700;color:#ffffff;transform:scaleX(0.9065);transform-origin:0 0;">Descartar</div>
<div class="tx" id="t_chat" style="left:1544.00px;top:181.12px;font-size:19px;line-height:19px;font-weight:700;color:#ffffff;transform:scaleX(1.0600);transform-origin:0 0;">Chat de la reunión</div>
<div class="tx" id="t_leido" style="left:1639.60px;top:227.05px;font-size:15px;line-height:15px;font-weight:700;color:#a6a7dc;transform:scaleX(0.9915);transform-origin:0 0;">Leído por última vez</div>
<div class="tx" id="k_title" style="left:697.80px;top:194.34px;font-size:12px;line-height:12px;font-weight:400;color:#a9a794;transform:scaleX(1.0043);transform-origin:0 0;">Proceso donaciones FM 2</div>
<div class="tx" id="k_zoom" style="left:200.40px;top:217.67px;font-size:11.5px;line-height:11.5px;font-weight:400;color:#a9a794;transform:scaleX(0.8437);transform-origin:0 0;">116 %</div>
<div class="tx" id="k_l1" style="left:125.60px;top:237.14px;font-size:10.7px;line-height:10.7px;font-weight:400;color:#aaa895;transform:scaleX(0.9922);transform-origin:0 0;">Visualización</div>
<div class="tx" id="k_l2" style="left:204.30px;top:237.14px;font-size:10.7px;line-height:10.7px;font-weight:400;color:#aaa895;transform:scaleX(0.9807);transform-origin:0 0;">Zoom</div>
<div class="tx" id="k_l3" style="left:248.00px;top:237.14px;font-size:10.7px;line-height:10.7px;font-weight:400;color:#aaa895;transform:scaleX(0.9956);transform-origin:0 0;">Añadir diapositiva</div>
<div class="tx" id="k_l4" style="left:438.10px;top:237.14px;font-size:10.7px;line-height:10.7px;font-weight:400;color:#aaa895;transform:scaleX(0.9717);transform-origin:0 0;">Reproducir</div>
<div class="tx" id="k_l5" style="left:497.20px;top:237.14px;font-size:10.7px;line-height:10.7px;font-weight:400;color:#aaa895;transform:scaleX(0.9709);transform-origin:0 0;">Keynote Live</div>
<div class="tx" id="k_l6" style="left:673.90px;top:237.14px;font-size:10.7px;line-height:10.7px;font-weight:400;color:#aaa895;transform:scaleX(0.9389);transform-origin:0 0;">Tabla</div>
<div class="tx" id="k_l7" style="left:715.00px;top:237.14px;font-size:10.7px;line-height:10.7px;font-weight:400;color:#aaa895;transform:scaleX(0.9752);transform-origin:0 0;">Gráfica</div>
<div class="tx" id="k_l8" style="left:767.60px;top:237.14px;font-size:10.7px;line-height:10.7px;font-weight:400;color:#aaa895;transform:scaleX(0.9669);transform-origin:0 0;">Texto</div>
<div class="tx" id="k_l9" style="left:811.90px;top:237.14px;font-size:10.7px;line-height:10.7px;font-weight:400;color:#aaa895;transform:scaleX(0.9704);transform-origin:0 0;">Figura</div>
<div class="tx" id="k_l10" style="left:854.30px;top:237.14px;font-size:10.7px;line-height:10.7px;font-weight:400;color:#aaa895;transform:scaleX(0.9925);transform-origin:0 0;">Multimedia</div>
<div class="tx" id="k_l11" style="left:913.40px;top:237.14px;font-size:10.7px;line-height:10.7px;font-weight:400;color:#aaa895;transform:scaleX(0.9900);transform-origin:0 0;">Comentario</div>
<div class="tx" id="k_l12" style="left:1077.50px;top:237.14px;font-size:10.7px;line-height:10.7px;font-weight:400;color:#aaa895;transform:scaleX(0.9694);transform-origin:0 0;">Colaborar</div>
<div class="tx" id="k_l13" style="left:1236.00px;top:237.14px;font-size:10.7px;line-height:10.7px;font-weight:400;color:#aaa895;transform:scaleX(0.9800);transform-origin:0 0;">Formato</div>
<div class="tx" id="k_l14" style="left:1283.30px;top:237.14px;font-size:10.7px;line-height:10.7px;font-weight:400;color:#aaa895;transform:scaleX(0.9778);transform-origin:0 0;">Animación</div>
<div class="tx" id="k_l15" style="left:1340.00px;top:237.14px;font-size:10.7px;line-height:10.7px;font-weight:400;color:#aaa895;transform:scaleX(0.9862);transform-origin:0 0;">Documento</div>
<div class="tx" id="s_title" style="left:533.60px;top:285.58px;font-size:65px;line-height:65px;font-weight:400;color:#000000;transform:scaleX(1.0115);transform-origin:0 0;-webkit-text-stroke:1.6px #000">Vacunación COVID</div>
<div class="tx" id="s_l1" style="left:489.00px;top:409.97px;font-size:25.2px;line-height:25.2px;font-weight:700;color:#000000;transform:scaleX(1.0043);transform-origin:0 0;">Debate sobre la cobertura de vacunación Mundial</div>
<div class="tx" id="s_l2" style="left:461.30px;top:471.17px;font-size:25.2px;line-height:25.2px;font-weight:700;color:#000000;transform:scaleX(0.9986);transform-origin:0 0;">Actualmente, distintos laboratorios, diferentes precios</div>
<div class="tx" id="s_l3" style="left:356.50px;top:543.57px;font-size:25.2px;line-height:25.2px;font-weight:700;color:#000000;">Europa ha decidido,  comprar cantidad equitativa entre sus países miembros</div>
<div class="tx" id="s_l4" style="left:377.00px;top:615.67px;font-size:25.2px;line-height:25.2px;font-weight:700;color:#000000;transform:scaleX(0.9965);transform-origin:0 0;">Banco Mundial, pone a disposición los países que lo necesiten un crédito</div>
<div class="tx" id="s_l5" style="left:606.70px;top:646.97px;font-size:25.2px;line-height:25.2px;font-weight:700;color:#000000;transform:scaleX(1.0019);transform-origin:0 0;">especial para la vacunación COVID</div>
<div class="tx" id="s_l6" style="left:421.30px;top:742.87px;font-size:25.2px;line-height:25.2px;font-weight:700;color:#000000;transform:scaleX(0.9914);transform-origin:0 0;">Cómo deberían hacerse las donaciones de Vacunas??????</div>
<div class="tx" id="num25" style="left:123.80px;top:299.97px;font-size:11.5px;line-height:11.5px;font-weight:700;color:#8f8d7e;transform:scaleX(0.8752);transform-origin:0 0;">25</div>
<div class="tx" id="num26" style="left:123.80px;top:370.27px;font-size:11.5px;line-height:11.5px;font-weight:700;color:#8f8d7e;transform:scaleX(0.8752);transform-origin:0 0;">26</div>
<div class="tx" id="num27" style="left:123.80px;top:440.57px;font-size:11.5px;line-height:11.5px;font-weight:700;color:#8f8d7e;transform:scaleX(0.8752);transform-origin:0 0;">27</div>
<div class="tx" id="num28" style="left:123.80px;top:510.87px;font-size:11.5px;line-height:11.5px;font-weight:700;color:#8f8d7e;transform:scaleX(0.8752);transform-origin:0 0;">28</div>
<div class="tx" id="num29" style="left:123.80px;top:581.17px;font-size:11.5px;line-height:11.5px;font-weight:700;color:#8f8d7e;transform:scaleX(0.8752);transform-origin:0 0;">29</div>
<div class="tx" id="num30" style="left:123.80px;top:651.37px;font-size:11.5px;line-height:11.5px;font-weight:700;color:#8f8d7e;transform:scaleX(0.8752);transform-origin:0 0;">30</div>
<div class="tx" id="num31" style="left:125.30px;top:721.67px;font-size:11.5px;line-height:11.5px;font-weight:700;color:#8f8d7e;transform:scaleX(0.7580);transform-origin:0 0;">31</div>
<div class="tx" id="num32" style="left:123.80px;top:791.97px;font-size:11.5px;line-height:11.5px;font-weight:700;color:#8f8d7e;transform:scaleX(0.8752);transform-origin:0 0;">32</div>
<div class="tx" id="num33" style="left:123.80px;top:862.27px;font-size:11.5px;line-height:11.5px;font-weight:700;color:#8f8d7e;transform:scaleX(0.8752);transform-origin:0 0;">33</div>
<div class="tx" id="c_av" style="left:1555.20px;top:288.16px;font-size:16px;line-height:16px;font-weight:400;color:#3d5a34;transform:scaleX(0.9575);transform-origin:0 0;">AV</div>
<div class="tx" id="c_a" style="left:1560.20px;top:507.50px;font-size:15px;line-height:15px;font-weight:700;color:#1d3f73;transform:scaleX(0.9222);transform-origin:0 0;">A</div>
<div class="tx" id="c_n1" style="left:1592.60px;top:281.85px;font-size:14px;line-height:14px;font-weight:400;color:#b3b0ad;transform:scaleX(0.9671);transform-origin:0 0;">ANDREA GONZÁLEZ VALCÁRCEL</div>
<div class="tx" id="c_t1" style="left:1592.60px;top:306.85px;font-size:14px;line-height:14px;font-weight:400;color:#b3b0ad;transform:scaleX(0.9758);transform-origin:0 0;">17:17</div>
<div class="tx" id="c_n2" style="left:1592.60px;top:501.15px;font-size:14px;line-height:14px;font-weight:400;color:#b3b0ad;transform:scaleX(1.0792);transform-origin:0 0;">Albaplou (Invitado)</div>
<div class="tx" id="c_t2" style="left:1734.60px;top:501.15px;font-size:14px;line-height:14px;font-weight:400;color:#b3b0ad;transform:scaleX(0.9758);transform-origin:0 0;">17:22</div>
<div class="tx" id="c_gif" style="left:1717.20px;top:995.13px;font-size:10px;line-height:10px;font-weight:700;color:#c8c6c4;transform:scaleX(0.8097);transform-origin:0 0;">GIF</div>
<div class="tx" id="c_ph" style="left:1565.40px;top:941.66px;font-size:18px;line-height:18px;font-weight:400;color:#b3b0ad;transform:scaleX(0.9372);transform-origin:0 0;">Escribe un mensaje nuevo</div>
<div class="tx" id="m1_0" style="left:1592.60px;top:331.66px;font-size:16px;line-height:16px;font-weight:400;color:#ececec;transform:scaleX(1.087);transform-origin:0 0">Con respecto a los residuos que</div>
<div class="tx" id="m1_1" style="left:1592.60px;top:356.66px;font-size:16px;line-height:16px;font-weight:400;color:#ececec;transform:scaleX(1.087);transform-origin:0 0">se generan de las donaciones ,</div>
<div class="tx" id="m1_2" style="left:1592.60px;top:381.66px;font-size:16px;line-height:16px;font-weight:400;color:#ececec;transform:scaleX(1.087);transform-origin:0 0">¿quién es el responsable de su</div>
<div class="tx" id="m1_3" style="left:1592.60px;top:406.66px;font-size:16px;line-height:16px;font-weight:400;color:#ececec;transform:scaleX(1.087);transform-origin:0 0">gestión? ¿La pagaría el país</div>
<div class="tx" id="m1_4" style="left:1592.60px;top:431.66px;font-size:16px;line-height:16px;font-weight:400;color:#ececec;transform:scaleX(1.087);transform-origin:0 0">receptor siempre?</div>
<div class="tx" id="m2_0" style="left:1592.60px;top:525.26px;font-size:16px;line-height:16px;font-weight:400;color:#ececec;transform:scaleX(1.087);transform-origin:0 0">Hola, me gustaría preguntarte</div>
<div class="tx" id="m2_1" style="left:1592.60px;top:550.26px;font-size:16px;line-height:16px;font-weight:400;color:#ececec;transform:scaleX(1.087);transform-origin:0 0">Miriam por tu opinión sobre</div>
<div class="tx" id="m2_2" style="left:1592.60px;top:575.26px;font-size:16px;line-height:16px;font-weight:400;color:#ececec;transform:scaleX(1.087);transform-origin:0 0">cómo luchar contra la</div>
<div class="tx" id="m2_3" style="left:1592.60px;top:600.26px;font-size:16px;line-height:16px;font-weight:400;color:#ececec;transform:scaleX(1.087);transform-origin:0 0">falsificación de medicamentos</div>
<div class="tx" id="m2_4" style="left:1592.60px;top:625.26px;font-size:16px;line-height:16px;font-weight:400;color:#ececec;transform:scaleX(1.087);transform-origin:0 0">que se encuentra tan extendida</div>
<div class="tx" id="m2_5" style="left:1592.60px;top:650.26px;font-size:16px;line-height:16px;font-weight:400;color:#ececec;transform:scaleX(1.087);transform-origin:0 0">en muchos países de África (por</div>
<div class="tx" id="m2_6" style="left:1592.60px;top:675.26px;font-size:16px;line-height:16px;font-weight:400;color:#ececec;transform:scaleX(1.087);transform-origin:0 0">ejemplo en Camerún el 30% de</div>
<div class="tx" id="m2_7" style="left:1592.60px;top:700.26px;font-size:16px;line-height:16px;font-weight:400;color:#ececec;transform:scaleX(1.087);transform-origin:0 0">los medicamentos son falsos y</div>
<div class="tx" id="m2_8" style="left:1592.60px;top:725.26px;font-size:16px;line-height:16px;font-weight:400;color:#ececec;transform:scaleX(1.087);transform-origin:0 0">no solo refiriéndonos a los de</div>
<div class="tx" id="m2_9" style="left:1592.60px;top:750.26px;font-size:16px;line-height:16px;font-weight:400;color:#ececec;transform:scaleX(1.087);transform-origin:0 0">venta ambulante sino también a</div>
<div class="tx" id="m2_10" style="left:1592.60px;top:775.26px;font-size:16px;line-height:16px;font-weight:400;color:#ececec;transform:scaleX(1.087);transform-origin:0 0">los que se cuelan en el circuito</div>
<div class="tx" id="m2_11" style="left:1592.60px;top:800.26px;font-size:16px;line-height:16px;font-weight:400;color:#ececec;transform:scaleX(1.087);transform-origin:0 0">legal de hospitales). Es un tema</div>
<div class="tx" id="m2_12" style="left:1592.60px;top:825.26px;font-size:16px;line-height:16px;font-weight:400;color:#ececec;transform:scaleX(1.087);transform-origin:0 0">complejo al que no le encuentro</div>
<div class="tx" id="m2_13" style="left:1592.60px;top:850.26px;font-size:16px;line-height:16px;font-weight:400;color:#ececec;transform:scaleX(1.087);transform-origin:0 0">solución...</div>
<div class="tx" id="b_32" style="left:116.90px;top:962.76px;font-size:18px;line-height:18px;font-weight:700;color:#ffffff;transform:scaleX(0.9821);transform-origin:0 0;">+32</div>
<div class="tx" id="b_nm" style="left:218.90px;top:961.32px;font-size:21px;line-height:21px;font-weight:400;color:#123a6c;transform:scaleX(1.0621);transform-origin:0 0;-webkit-text-stroke:.5px #123a6c">NM</div>
<div class="tx" id="b_as" style="left:718.10px;top:961.32px;font-size:21px;line-height:21px;font-weight:400;color:#6b1a28;transform:scaleX(0.9281);transform-origin:0 0;-webkit-text-stroke:.5px #6b1a28">ÁS</div>
<div class="tx" id="b_gs" style="left:943.00px;top:961.32px;font-size:21px;line-height:21px;font-weight:400;color:#5e2a58;transform:scaleX(0.9063);transform-origin:0 0;-webkit-text-stroke:.5px #5e2a58">GS</div>
<div class="tx" id="b_av" style="left:1167.70px;top:961.32px;font-size:21px;line-height:21px;font-weight:400;color:#3d5a34;transform:scaleX(1.0201);transform-origin:0 0;-webkit-text-stroke:.5px #3d5a34">AV</div>
<div class="tx" id="b_mir" style="left:412.50px;top:1006.90px;font-size:15px;line-height:15px;font-weight:400;color:#ffffff;transform:scaleX(1.0135);transform-origin:0 0;">Miriam (Invitado)</div>
<div class="tx" id="b_ang" style="left:637.80px;top:1006.90px;font-size:15px;line-height:15px;font-weight:400;color:#ffffff;transform:scaleX(0.8885);transform-origin:0 0;">ÁNGELA LUJÁN SERR...</div>
<div class="tx" id="b_gra" style="left:862.50px;top:1006.90px;font-size:15px;line-height:15px;font-weight:400;color:#ffffff;transform:scaleX(0.9047);transform-origin:0 0;">GRACIA SANCHEZ SA...</div>
<div class="tx" id="b_and" style="left:1087.80px;top:1006.90px;font-size:15px;line-height:15px;font-weight:400;color:#ffffff;transform:scaleX(0.9158);transform-origin:0 0;">ANDREA GONZÁLEZ VALC...</div>
<div class="tx" id="s_mir" style="left:22.60px;top:877.00px;font-size:15px;line-height:15px;font-weight:400;color:#ffffff;transform:scaleX(1.0091);transform-origin:0 0;z-index:3">Miriam (Invitado)</div>
</body></html>
